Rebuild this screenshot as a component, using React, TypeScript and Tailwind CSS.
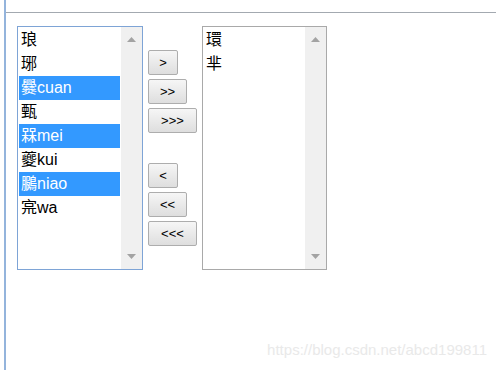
const leftItems = [
  { label: "琅", selected: false },
  { label: "琊", selected: false },
  { label: "爨cuan", selected: true },
  { label: "甄", selected: false },
  { label: "槑mei", selected: true },
  { label: "夔kui", selected: false },
  { label: "鵩niao", selected: true },
  { label: "宺wa", selected: false },
];

const rightItems = ["環", "芈"];

function ScrollTrack() {
  return (
    <div className="w-[21px] h-full bg-[#f0f0f0] flex flex-col items-center justify-between py-[10px]">
      <svg width="9" height="5" viewBox="0 0 9 5">
        <path d="M0 5 L4.5 0 L9 5 Z" fill="#a3a3a3" />
      </svg>
      <svg width="9" height="5" viewBox="0 0 9 5">
        <path d="M0 0 L4.5 5 L9 0 Z" fill="#a3a3a3" />
      </svg>
    </div>
  );
}

function ListBox({ items, focused, width }: { items: { label: string; selected: boolean }[]; focused?: boolean; width: string }) {
  return (
    <div
      className={`${width} h-[244px] flex border bg-white ${focused ? "border-[#7ea4d6]" : "border-[#a9a9a9]"}`}
    >
      <div className="flex-1 p-[1px] flex flex-col">
        {items.map((it) => (
          <div
            key={it.label}
            className={`h-[24px] leading-[24px] pl-[2px] text-[16px] ${it.selected ? "bg-[#3399ff] text-white" : "text-black"}`}
          >
            {it.label}
          </div>
        ))}
      </div>
      <ScrollTrack />
    </div>
  );
}

function Btn({ label, width }: { label: string; width: string }) {
  return (
    <button
      className={`${width} h-[25px] rounded-[2px] border border-[#adadad] bg-gradient-to-b from-[#f6f6f6] to-[#dedede] text-[13px] leading-none text-black`}
      style={{ fontFamily: '"Liberation Sans", sans-serif' }}
    >
      {label}
    </button>
  );
}

export default function App() {
  return (
    <div
      className="relative w-[496px] h-[370px] bg-white overflow-hidden pl-[4px]"
      style={{ fontFamily: '"Liberation Sans", "Noto Sans CJK SC", sans-serif' }}
    >
      <div className="h-full border-l-2 border-[#94b4dc] flex flex-col">
        <div className="h-[13px] border-b border-[#a3a9b0] shrink-0" />
        <div className="flex pl-[11px] pt-[13px] gap-[5px]">
          <ListBox items={leftItems} focused width="w-[126px]" />
          <div className="flex flex-col items-start pt-[24px]">
            <div className="flex flex-col items-start gap-[4px]">
              <Btn label=">" width="w-[30px]" />
              <Btn label=">>" width="w-[39px]" />
              <Btn label=">>>" width="w-[49px]" />
            </div>
            <div className="flex flex-col items-start gap-[4px] mt-[30px]">
              <Btn label="<" width="w-[30px]" />
              <Btn label="<<" width="w-[39px]" />
              <Btn label="<<<" width="w-[49px]" />
            </div>
          </div>
          <ListBox items={rightItems.map((l) => ({ label: l, selected: false }))} width="w-[125px]" />
        </div>
      </div>
      <div className="absolute right-[9px] bottom-[9px] text-[15px] text-[#e9e9e9]">
        https://blog.csdn.net/abcd199811
      </div>
    </div>
  );
}
